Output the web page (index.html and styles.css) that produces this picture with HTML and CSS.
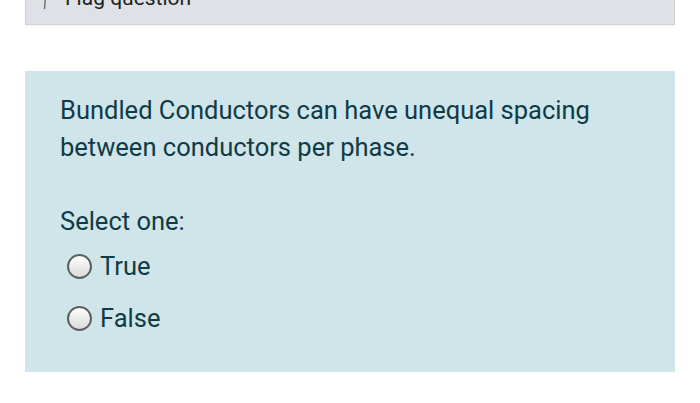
FILE: index.html
```html
<!DOCTYPE html>
<html>
<head>
<meta charset="utf-8">
<link rel="stylesheet" href="styles.css">
</head>
<body>
<div class="page">
  <div class="info">
    <div class="flag">
      <svg class="flag-icon" width="14" height="20" viewBox="0 0 14 20"><path d="M5 0 L3.5 19" stroke="#666" stroke-width="1.3" fill="none"/></svg>
      <span>Flag question</span>
    </div>
  </div>
  <div class="content">
    <p class="qtext">Bundled Conductors can have unequal spacing between conductors per phase.</p>
    <p class="prompt">Select one:</p>
    <div class="answers">
      <label class="opt"><span class="radio"></span><span>True</span></label>
      <label class="opt"><span class="radio"></span><span>False</span></label>
    </div>
  </div>
</div>
</body>
</html>
```
FILE: styles.css
```css
html, body {
  margin: 0;
  padding: 0;
  background: #ffffff;
  overflow: hidden;
}
body {
  font-family: Roboto, "Noto Sans", "Liberation Sans", sans-serif;
  color: #0f3b46;
}
.page {
  width: 650px;
  margin: 0 0 0 25px;
}
.info {
  height: 25px;
  margin-top: 0;
  background: #dee2e6;
  border: 1px solid #cfd3d7;
  border-top: none;
  box-sizing: border-box;
  box-shadow: 0 2px 3px rgba(0,0,0,0.04);
  overflow: hidden;
}
.flag {
  display: flex;
  align-items: flex-end;
  gap: 10px;
  padding-left: 15px;
  margin-top: -14px;
  font-size: 21px;
  line-height: 24px;
  color: #222;
}
.flag-icon {
  margin-bottom: 0;
}
.content {
  margin-top: 46px;
  background: #cfe5ea;
  padding: 21px 35px 30px 35px;
  height: 301px;
  box-sizing: border-box;
}
.qtext {
  margin: 0;
  font-size: 25.5px;
  line-height: 37px;
  width: 580px;
}
.prompt {
  margin: 37px 0 0 0;
  font-size: 25.5px;
  line-height: 37px;
}
.answers {
  display: flex;
  flex-direction: column;
  gap: 15px;
  margin-top: 8px;
}
.opt {
  display: flex;
  align-items: center;
  gap: 8px;
  font-size: 25.5px;
  line-height: 37px;
  padding-left: 7px;
}
.radio {
  width: 25px;
  height: 25px;
  box-sizing: border-box;
  border-radius: 50%;
  border: 2px solid #5c5f60;
  background: linear-gradient(#ffffff, #d9d9d9);
}
```
